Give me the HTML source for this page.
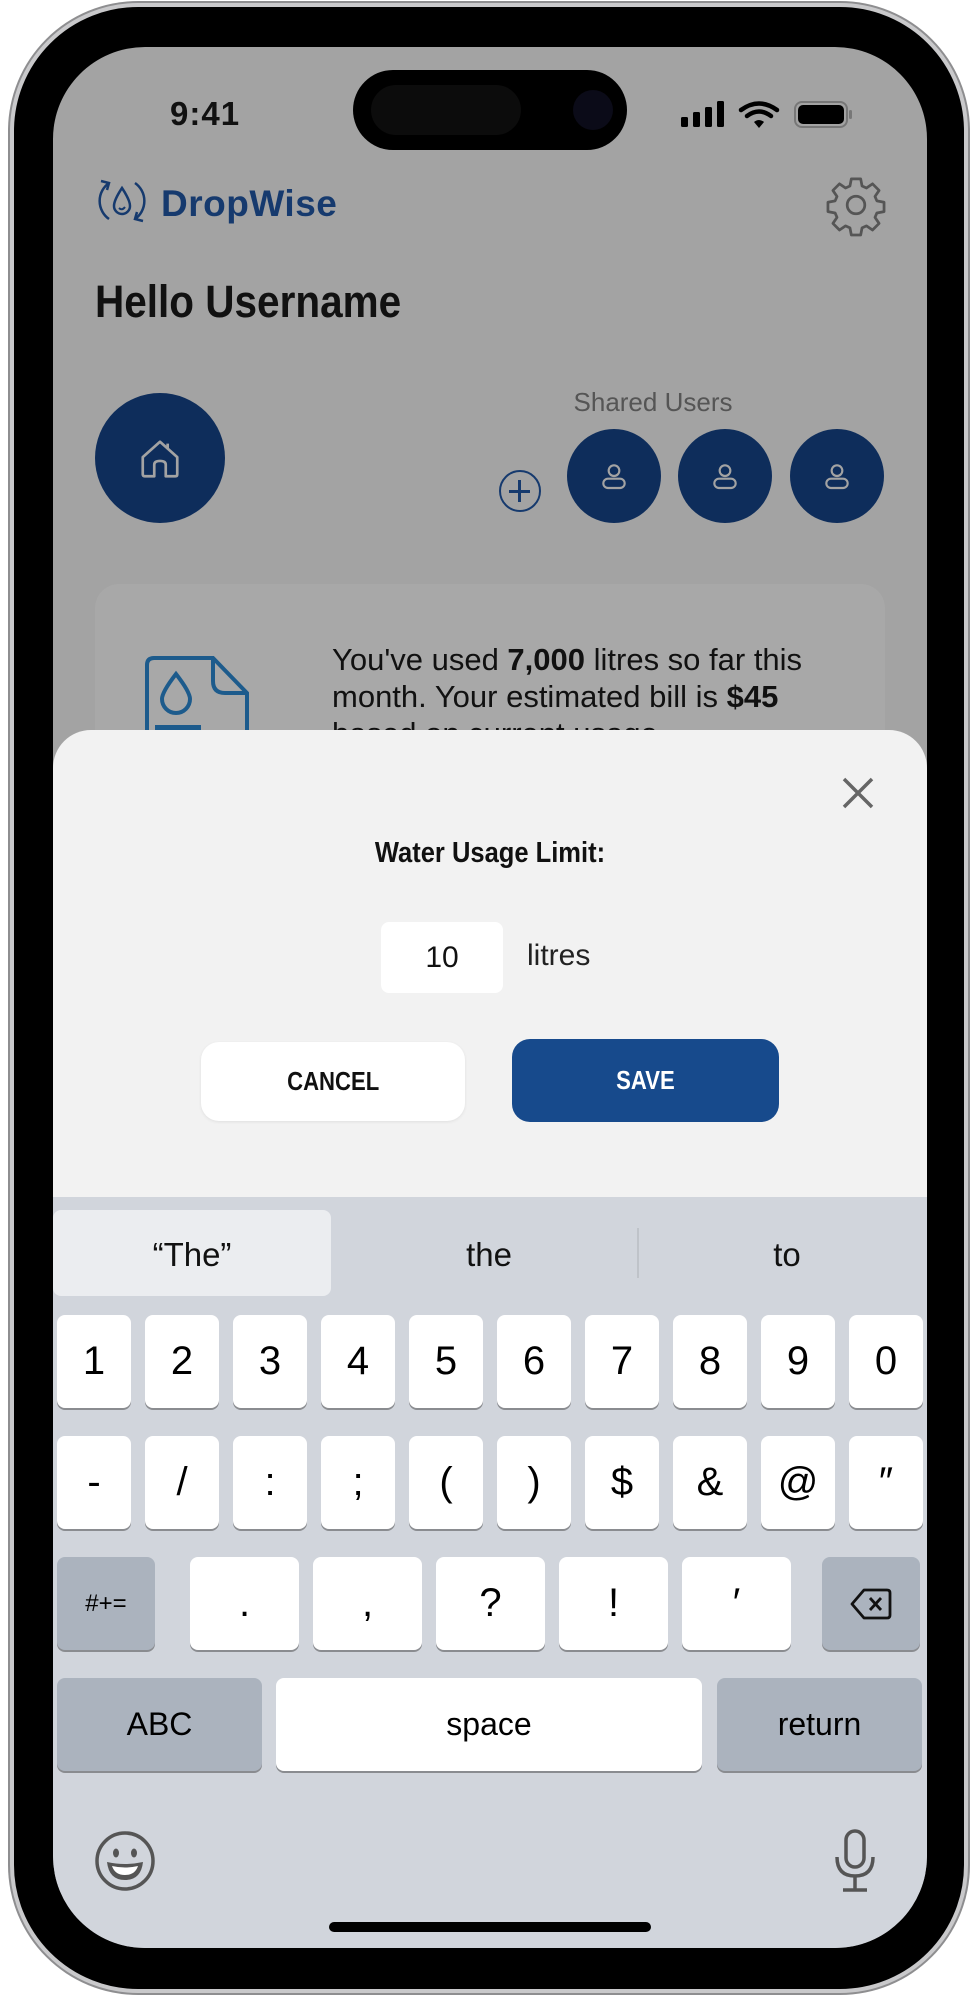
<!DOCTYPE html>
<html><head><meta charset="utf-8">
<style>
*{margin:0;padding:0;box-sizing:border-box}
html,body{width:978px;height:2000px;background:#fff;overflow:hidden;font-family:"Liberation Sans",sans-serif}
.abs{position:absolute}
.phone{position:absolute;left:10px;top:3px;width:958px;height:1990px;border-radius:128px;background:#000;border:4px solid #c9c9cb;box-shadow:0 0 0 2px #8e8e90}
.screen{position:absolute;left:53px;top:47px;width:874px;height:1901px;border-radius:92px;background:#a3a3a3;overflow:hidden}
.key{position:absolute;background:#fff;border-radius:8px;box-shadow:0 2px 0 #8a8c90;display:flex;align-items:center;justify-content:center;font-size:40px;color:#000}
.dk{background:#abb3be}
.uc{position:absolute;width:94px;height:94px;border-radius:50%;background:#0e2d5b;top:382px}
</style></head><body>
<div class="phone"></div>
<div class="screen">
  <!-- status -->
  <div class="abs" style="left:117px;top:48px;font-size:33px;font-weight:bold;color:#111;letter-spacing:1px">9:41</div>
  <div class="abs" style="left:300px;top:23px;width:274px;height:80px;border-radius:40px;background:#000"></div>
  <div class="abs" style="left:318px;top:38px;width:150px;height:50px;border-radius:25px;background:#0c0c0c"></div>
  <div class="abs" style="left:520px;top:43px;width:40px;height:40px;border-radius:50%;background:#0b0b18"></div>
  <svg class="abs" style="left:628px;top:54px" width="180" height="30" viewBox="0 0 180 30">
    <rect x="0" y="16" width="7" height="10" rx="1.5" fill="#000"/>
    <rect x="12" y="11" width="7" height="15" rx="1.5" fill="#000"/>
    <rect x="24" y="6" width="7" height="20" rx="1.5" fill="#000"/>
    <rect x="36" y="0" width="7" height="26" rx="1.5" fill="#000"/>
    <path d="M60 9 Q78 -4 96 9" stroke="#000" stroke-width="4.5" fill="none" stroke-linecap="round"/>
    <path d="M66 15 Q78 6 90 15" stroke="#000" stroke-width="4.5" fill="none" stroke-linecap="round"/>
    <path d="M73 21 L78 27 L83 21 Q78 17 73 21Z" fill="#000"/>
    <rect x="114" y="1" width="52" height="25" rx="7" fill="none" stroke="#777" stroke-width="2"/>
    <rect x="117" y="4" width="46" height="19" rx="5" fill="#000"/>
    <rect x="168" y="9" width="3" height="9" rx="1.5" fill="#777"/>
  </svg>
  <!-- logo -->
  <svg class="abs" style="left:42px;top:128px" width="54" height="52" viewBox="0 0 54 52">
    <path d="M14 8 A22 22 0 0 0 14 44" stroke="#163a6e" stroke-width="2.5" fill="none"/>
    <path d="M40 44 A22 22 0 0 0 40 8" stroke="#163a6e" stroke-width="2.5" fill="none"/>
    <path d="M6 6 L14 8 L12 15" stroke="#163a6e" stroke-width="2.5" fill="none"/>
    <path d="M48 46 L40 44 L42 37" stroke="#163a6e" stroke-width="2.5" fill="none"/>
    <path d="M27 13 Q19 25 19 31 A8 8 0 0 0 35 31 Q35 25 27 13Z" stroke="#163a6e" stroke-width="2.5" fill="none"/>
    <path d="M24 33 Q27 36 30 32" stroke="#163a6e" stroke-width="2" fill="none"/>
  </svg>
  <div class="abs" style="left:108px;top:136px;font-size:37px;font-weight:bold;color:#163a6e;letter-spacing:0.5px">DropWise</div>
  <svg class="abs" style="left:770px;top:125px" width="66" height="66" viewBox="0 0 24 24">
    <path d="M10.3 2.5h3.4l.5 2.6 1.6.7 2.2-1.5 2.4 2.4-1.5 2.2.7 1.6 2.6.5v3.4l-2.6.5-.7 1.6 1.5 2.2-2.4 2.4-2.2-1.5-1.6.7-.5 2.6h-3.4l-.5-2.6-1.6-.7-2.2 1.5-2.4-2.4 1.5-2.2-.7-1.6-2.6-.5v-3.4l2.6-.5.7-1.6-1.5-2.2 2.4-2.4 2.2 1.5 1.6-.7z" fill="none" stroke="#555" stroke-width="1" stroke-linejoin="round"/>
    <circle cx="12" cy="12" r="3.2" fill="none" stroke="#555" stroke-width="1"/>
  </svg>
  <div class="abs" style="left:42px;top:229px;font-size:45px;font-weight:bold;color:#111;transform:scaleX(0.9);transform-origin:left;line-height:52px">Hello Username</div>
  <!-- home -->
  <div class="abs" style="left:42px;top:346px;width:130px;height:130px;border-radius:50%;background:#0e2d5b"></div>
  <svg class="abs" style="left:84px;top:389px" width="46" height="46" viewBox="0 0 24 24"><path d="M3 11 L12 3 L21 11 V20 Q21 21 20 21 H15 V15 Q15 13 12 13 Q9 13 9 15 V21 H4 Q3 21 3 20Z M16 4 V7" fill="none" stroke="#a3a3a3" stroke-width="1.4" stroke-linejoin="round"/></svg>
  <div class="abs" style="left:500px;top:340px;width:200px;text-align:center;font-size:26px;color:#555">Shared Users</div>
  <div class="abs" style="left:446px;top:423px;width:42px;height:42px;border-radius:50%;border:2.5px solid #163a6e"></div>
  <div class="abs" style="left:465px;top:433px;width:2.5px;height:22px;background:#163a6e"></div>
  <div class="abs" style="left:456px;top:443px;width:21px;height:2.5px;background:#163a6e"></div>
  <div class="uc" style="left:514px"></div><div class="uc" style="left:625px"></div><div class="uc" style="left:737px"></div>
  <svg class="abs" style="left:545px;top:413px" width="32" height="32" viewBox="0 0 24 24"><circle cx="12" cy="8" r="4" fill="none" stroke="#a3a3a3" stroke-width="1.6"/><rect x="4" y="14" width="16" height="7" rx="3.5" fill="none" stroke="#a3a3a3" stroke-width="1.6"/></svg>
  <svg class="abs" style="left:656px;top:413px" width="32" height="32" viewBox="0 0 24 24"><circle cx="12" cy="8" r="4" fill="none" stroke="#a3a3a3" stroke-width="1.6"/><rect x="4" y="14" width="16" height="7" rx="3.5" fill="none" stroke="#a3a3a3" stroke-width="1.6"/></svg>
  <svg class="abs" style="left:768px;top:413px" width="32" height="32" viewBox="0 0 24 24"><circle cx="12" cy="8" r="4" fill="none" stroke="#a3a3a3" stroke-width="1.6"/><rect x="4" y="14" width="16" height="7" rx="3.5" fill="none" stroke="#a3a3a3" stroke-width="1.6"/></svg>
  <!-- card -->
  <div class="abs" style="left:42px;top:537px;width:790px;height:400px;border-radius:24px;background:#a8a8a8"></div>
  <svg class="abs" style="left:90px;top:608px" width="112" height="90" viewBox="0 0 112 90">
    <path d="M4 90 V10 Q4 3 11 3 H70 L104 38 V90" fill="none" stroke="#1d5b8c" stroke-width="4"/>
    <path d="M70 3 V26 Q70 38 82 38 H104" fill="none" stroke="#1d5b8c" stroke-width="4"/>
    <path d="M33 19 Q19 37 19 44 A14 14 0 0 0 47 44 Q47 37 33 19Z" fill="none" stroke="#1d5b8c" stroke-width="4"/>
    <rect x="12" y="70" width="46" height="5" fill="#1d5b8c"/>
  </svg>
  <div class="abs" style="left:279px;top:594px;font-size:31px;line-height:37px;color:#111;width:495px">You've used <b>7,000</b> litres so far this month. Your estimated bill is <b>$45</b> based on current usage.</div>
  <!-- modal -->
  <div class="abs" style="left:0;top:683px;width:874px;height:520px;border-radius:38px 38px 0 0;background:#f2f2f2"></div>
  <svg class="abs" style="left:789px;top:730px" width="32" height="32" viewBox="0 0 32 32"><path d="M2 2 L30 30 M30 2 L2 30" stroke="#666" stroke-width="3.5"/></svg>
  <div class="abs" style="left:0;top:790px;width:874px;text-align:center;font-size:29px;font-weight:bold;color:#111;transform:scaleX(0.88)">Water Usage Limit:</div>
  <div class="abs" style="left:328px;top:875px;width:122px;height:71px;border-radius:8px;background:#fff;display:flex;align-items:center;justify-content:center;font-size:30px;color:#111">10</div>
  <div class="abs" style="left:474px;top:892px;font-size:30px;color:#222">litres</div>
  <div class="abs" style="left:148px;top:995px;width:264px;height:79px;border-radius:18px;background:#fff;box-shadow:0 1px 3px rgba(0,0,0,.08);display:flex;align-items:center;justify-content:center;font-size:26px;font-weight:bold;color:#111"><span style="transform:scaleX(.85)">CANCEL</span></div>
  <div class="abs" style="left:459px;top:992px;width:267px;height:83px;border-radius:18px;background:#174a8c;display:flex;align-items:center;justify-content:center;font-size:26px;font-weight:bold;color:#fff"><span style="transform:scaleX(.85)">SAVE</span></div>
  <!-- keyboard -->
  <div class="abs" style="left:0;top:1150px;width:874px;height:760px;background:#d1d5dc"></div>
  <div class="abs" style="left:0;top:1163px;width:278px;height:86px;border-radius:8px;background:#ebedf0"></div>
  <div class="abs" style="left:584px;top:1181px;width:1.5px;height:50px;background:#bfc3c9"></div>
  <div class="abs" style="left:0;top:1189px;width:278px;text-align:center;font-size:33px;color:#111">“The”</div>
  <div class="abs" style="left:300px;top:1189px;width:272px;text-align:center;font-size:33px;color:#111">the</div>
  <div class="abs" style="left:600px;top:1189px;width:268px;text-align:center;font-size:33px;color:#111">to</div>

  <div class="key" style="left:4px;top:1268px;width:74px;height:93px">1</div>
  <div class="key" style="left:92px;top:1268px;width:74px;height:93px">2</div>
  <div class="key" style="left:180px;top:1268px;width:74px;height:93px">3</div>
  <div class="key" style="left:268px;top:1268px;width:74px;height:93px">4</div>
  <div class="key" style="left:356px;top:1268px;width:74px;height:93px">5</div>
  <div class="key" style="left:444px;top:1268px;width:74px;height:93px">6</div>
  <div class="key" style="left:532px;top:1268px;width:74px;height:93px">7</div>
  <div class="key" style="left:620px;top:1268px;width:74px;height:93px">8</div>
  <div class="key" style="left:708px;top:1268px;width:74px;height:93px">9</div>
  <div class="key" style="left:796px;top:1268px;width:74px;height:93px">0</div>

  <div class="key" style="left:4px;top:1389px;width:74px;height:93px">-</div>
  <div class="key" style="left:92px;top:1389px;width:74px;height:93px">/</div>
  <div class="key" style="left:180px;top:1389px;width:74px;height:93px">:</div>
  <div class="key" style="left:268px;top:1389px;width:74px;height:93px">;</div>
  <div class="key" style="left:356px;top:1389px;width:74px;height:93px">(</div>
  <div class="key" style="left:444px;top:1389px;width:74px;height:93px">)</div>
  <div class="key" style="left:532px;top:1389px;width:74px;height:93px">$</div>
  <div class="key" style="left:620px;top:1389px;width:74px;height:93px">&amp;</div>
  <div class="key" style="left:708px;top:1389px;width:74px;height:93px">@</div>
  <div class="key" style="left:796px;top:1389px;width:74px;height:93px">″</div>

  <div class="key dk" style="left:4px;top:1510px;width:98px;height:93px;font-size:24px">#+=</div>
  <div class="key" style="left:137px;top:1510px;width:109px;height:93px">.</div>
  <div class="key" style="left:260px;top:1510px;width:109px;height:93px">,</div>
  <div class="key" style="left:383px;top:1510px;width:109px;height:93px">?</div>
  <div class="key" style="left:506px;top:1510px;width:109px;height:93px">!</div>
  <div class="key" style="left:629px;top:1510px;width:109px;height:93px">′</div>
  <div class="key dk" style="left:769px;top:1510px;width:98px;height:93px">
    <svg width="42" height="32" viewBox="0 0 42 32"><path d="M14 2 H37 Q40 2 40 5 V27 Q40 30 37 30 H14 L2 16Z" fill="none" stroke="#111" stroke-width="2.8" stroke-linejoin="round"/><path d="M20 10 L31 22 M31 10 L20 22" stroke="#111" stroke-width="2.8"/></svg>
  </div>

  <div class="key dk" style="left:4px;top:1631px;width:205px;height:93px;font-size:32px">ABC</div>
  <div class="key" style="left:223px;top:1631px;width:426px;height:93px;font-size:32px">space</div>
  <div class="key dk" style="left:664px;top:1631px;width:205px;height:93px;font-size:32px">return</div>

  <svg class="abs" style="left:41px;top:1783px" width="62" height="62" viewBox="0 0 62 62"><circle cx="31" cy="31" r="28" fill="none" stroke="#555" stroke-width="3.5"/><ellipse cx="22" cy="23" rx="3" ry="4.5" fill="#555"/><ellipse cx="40" cy="23" rx="3" ry="4.5" fill="#555"/><path d="M13 32 Q31 36 49 32 Q47 50 31 50 Q15 50 13 32Z" fill="#555"/><path d="M18 36 Q31 39 44 36 Q41 45 31 45 Q21 45 18 36Z" fill="#fff"/></svg>
  <svg class="abs" style="left:780px;top:1782px" width="44" height="64" viewBox="0 0 44 64"><rect x="13" y="2" width="18" height="36" rx="9" fill="none" stroke="#555" stroke-width="3.5"/><path d="M4 28 Q4 47 22 47 Q40 47 40 28 M22 47 V60 M10 61 H34" fill="none" stroke="#555" stroke-width="3.5"/></svg>
  <div class="abs" style="left:276px;top:1875px;width:322px;height:10px;border-radius:5px;background:#000"></div>
</div>
</body></html>
